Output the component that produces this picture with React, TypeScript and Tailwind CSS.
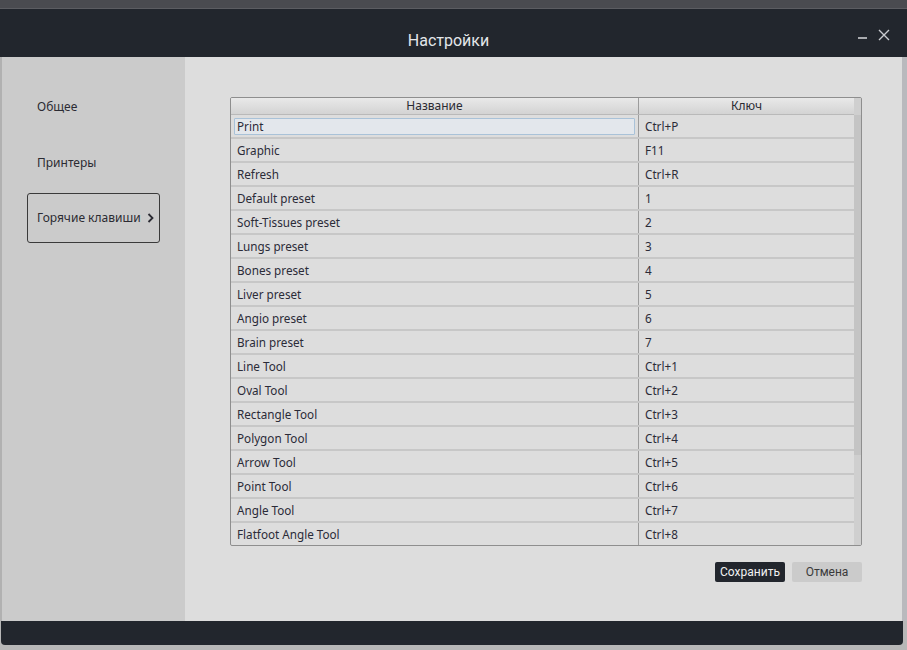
import React from "react";

const rows: [string, string][] = [
  ["Print", "Ctrl+P"],
  ["Graphic", "F11"],
  ["Refresh", "Ctrl+R"],
  ["Default preset", "1"],
  ["Soft-Tissues preset", "2"],
  ["Lungs preset", "3"],
  ["Bones preset", "4"],
  ["Liver preset", "5"],
  ["Angio preset", "6"],
  ["Brain preset", "7"],
  ["Line Tool", "Ctrl+1"],
  ["Oval Tool", "Ctrl+2"],
  ["Rectangle Tool", "Ctrl+3"],
  ["Polygon Tool", "Ctrl+4"],
  ["Arrow Tool", "Ctrl+5"],
  ["Point Tool", "Ctrl+6"],
  ["Angle Tool", "Ctrl+7"],
  ["Flatfoot Angle Tool", "Ctrl+8"],
];

export default function App() {
  return (
    <div
      className="w-[907px] h-[650px] bg-[#b7b7b7] flex flex-col overflow-hidden"
      style={{ fontFamily: "'Noto Sans', 'Open Sans', sans-serif" }}
    >
      {/* top strip */}
      <div className="h-[9px] bg-[#4a4b50] border-b border-[#5c5d62] shrink-0" />
      {/* header */}
      <div className="h-[48px] bg-[#22262d] shrink-0 flex items-center relative">
        <div
          className="flex-1 text-center text-[16px] text-[#e4e6ea] pt-[16px] pr-[10px]"
          style={{ fontFamily: "Roboto, sans-serif" }}
        >
          Настройки
        </div>
        <div className="absolute right-[17px] top-[20px] flex items-end gap-[11px]">
          <div className="w-[9px] h-[2px] bg-[#a9abaf] mb-[2px]" />
          <svg width="12" height="12" viewBox="0 0 12 12">
            <path d="M1 1 L11 11 M11 1 L1 11" stroke="#c9cbcf" strokeWidth="1.4" />
          </svg>
        </div>
      </div>
      {/* body */}
      <div className="h-[564px] flex shrink-0">
        <div className="w-[2px] bg-[#b1b1b1]" />
        <div className="w-[900px] flex">
          {/* sidebar */}
          <div className="w-[183px] bg-[#cbcbcb] flex flex-col pt-[40px] text-[12px] text-[#2b2b33]">
            <div className="pl-[35px] h-[20px] flex items-center">Общее</div>
            <div className="pl-[35px] h-[20px] flex items-center mt-[36px]">Принтеры</div>
            <div className="ml-[25px] mt-[20px] w-[133px] h-[50px] border border-[#3a3a3a] rounded-[3px] flex items-center pl-[9px] gap-[6px]">
              <span>Горячие клавиши</span>
              <svg width="7" height="10" viewBox="0 0 7 10">
                <path d="M1.5 1 L5.5 5 L1.5 9" stroke="#2b2b33" strokeWidth="1.8" fill="none" />
              </svg>
            </div>
          </div>
          {/* main */}
          <div className="flex-1 bg-[#dddddd] flex flex-col pl-[45px] pt-[40px]">
            <div className="w-[632px] h-[449px] border border-[#8e8e8e] rounded-[2px] flex overflow-hidden">
              <div className="flex-1 flex flex-col overflow-hidden">
                <div className="h-[17px] shrink-0 flex bg-gradient-to-b from-[#e9e9e9] to-[#d3d3d3] border-b border-[#b9b9b9] text-[12px] text-[#2b2b33]">
                  <div className="w-[408px] border-r border-[#9c9c9c] flex items-center justify-center leading-none">Название</div>
                  <div className="flex-1 flex items-center justify-center leading-none">Ключ</div>
                </div>
                <div className="flex flex-col text-[11.7px] text-[#2b2b38]">
                  {rows.map(([name, key], i) => (
                    <div key={i} className="h-[24px] shrink-0 flex border-b-2 border-[#c7c7c7]">
                      <div className="w-[408px] border-r border-[#9c9c9c] flex items-center px-[3px] pt-[1px]">
                        {i === 0 ? (
                          <div className="w-full h-[17px] border border-[#a9c2d8] bg-[#e3e7ec] rounded-[1px] flex items-center pl-[2px]">
                            {name}
                          </div>
                        ) : (
                          <span className="pl-[3px]">{name}</span>
                        )}
                      </div>
                      <div className="flex-1 flex items-center pl-[6px] pt-[1px]">{key}</div>
                    </div>
                  ))}
                </div>
              </div>
              {/* scrollbar */}
              <div className="w-[7px] bg-[#cfcfcf] flex flex-col pt-[17px]">
                <div className="h-[340px] bg-[#c4c4c4]" />
              </div>
            </div>
            <div className="w-[632px] flex justify-end gap-[7px] mt-[16px]">
              <div
                className="w-[70px] h-[20px] bg-[#22262d] rounded-[2px] text-[#f1f1f1] text-[12px] flex items-center justify-center"
                style={{ fontFamily: "Roboto, sans-serif" }}
              >
                Сохранить
              </div>
              <div
                className="w-[70px] h-[20px] bg-[#cbcbcb] rounded-[2px] text-[#3a3a3a] text-[12px] flex items-center justify-center"
                style={{ fontFamily: "Roboto, sans-serif" }}
              >
                Отмена
              </div>
            </div>
          </div>
        </div>
        <div className="flex-1 bg-[#b9b9bd]" />
      </div>
      {/* footer */}
      <div className="h-[24px] ml-[1px] w-[902px] bg-[#22262d] rounded-b-[4px] shrink-0" />
    </div>
  );
}
